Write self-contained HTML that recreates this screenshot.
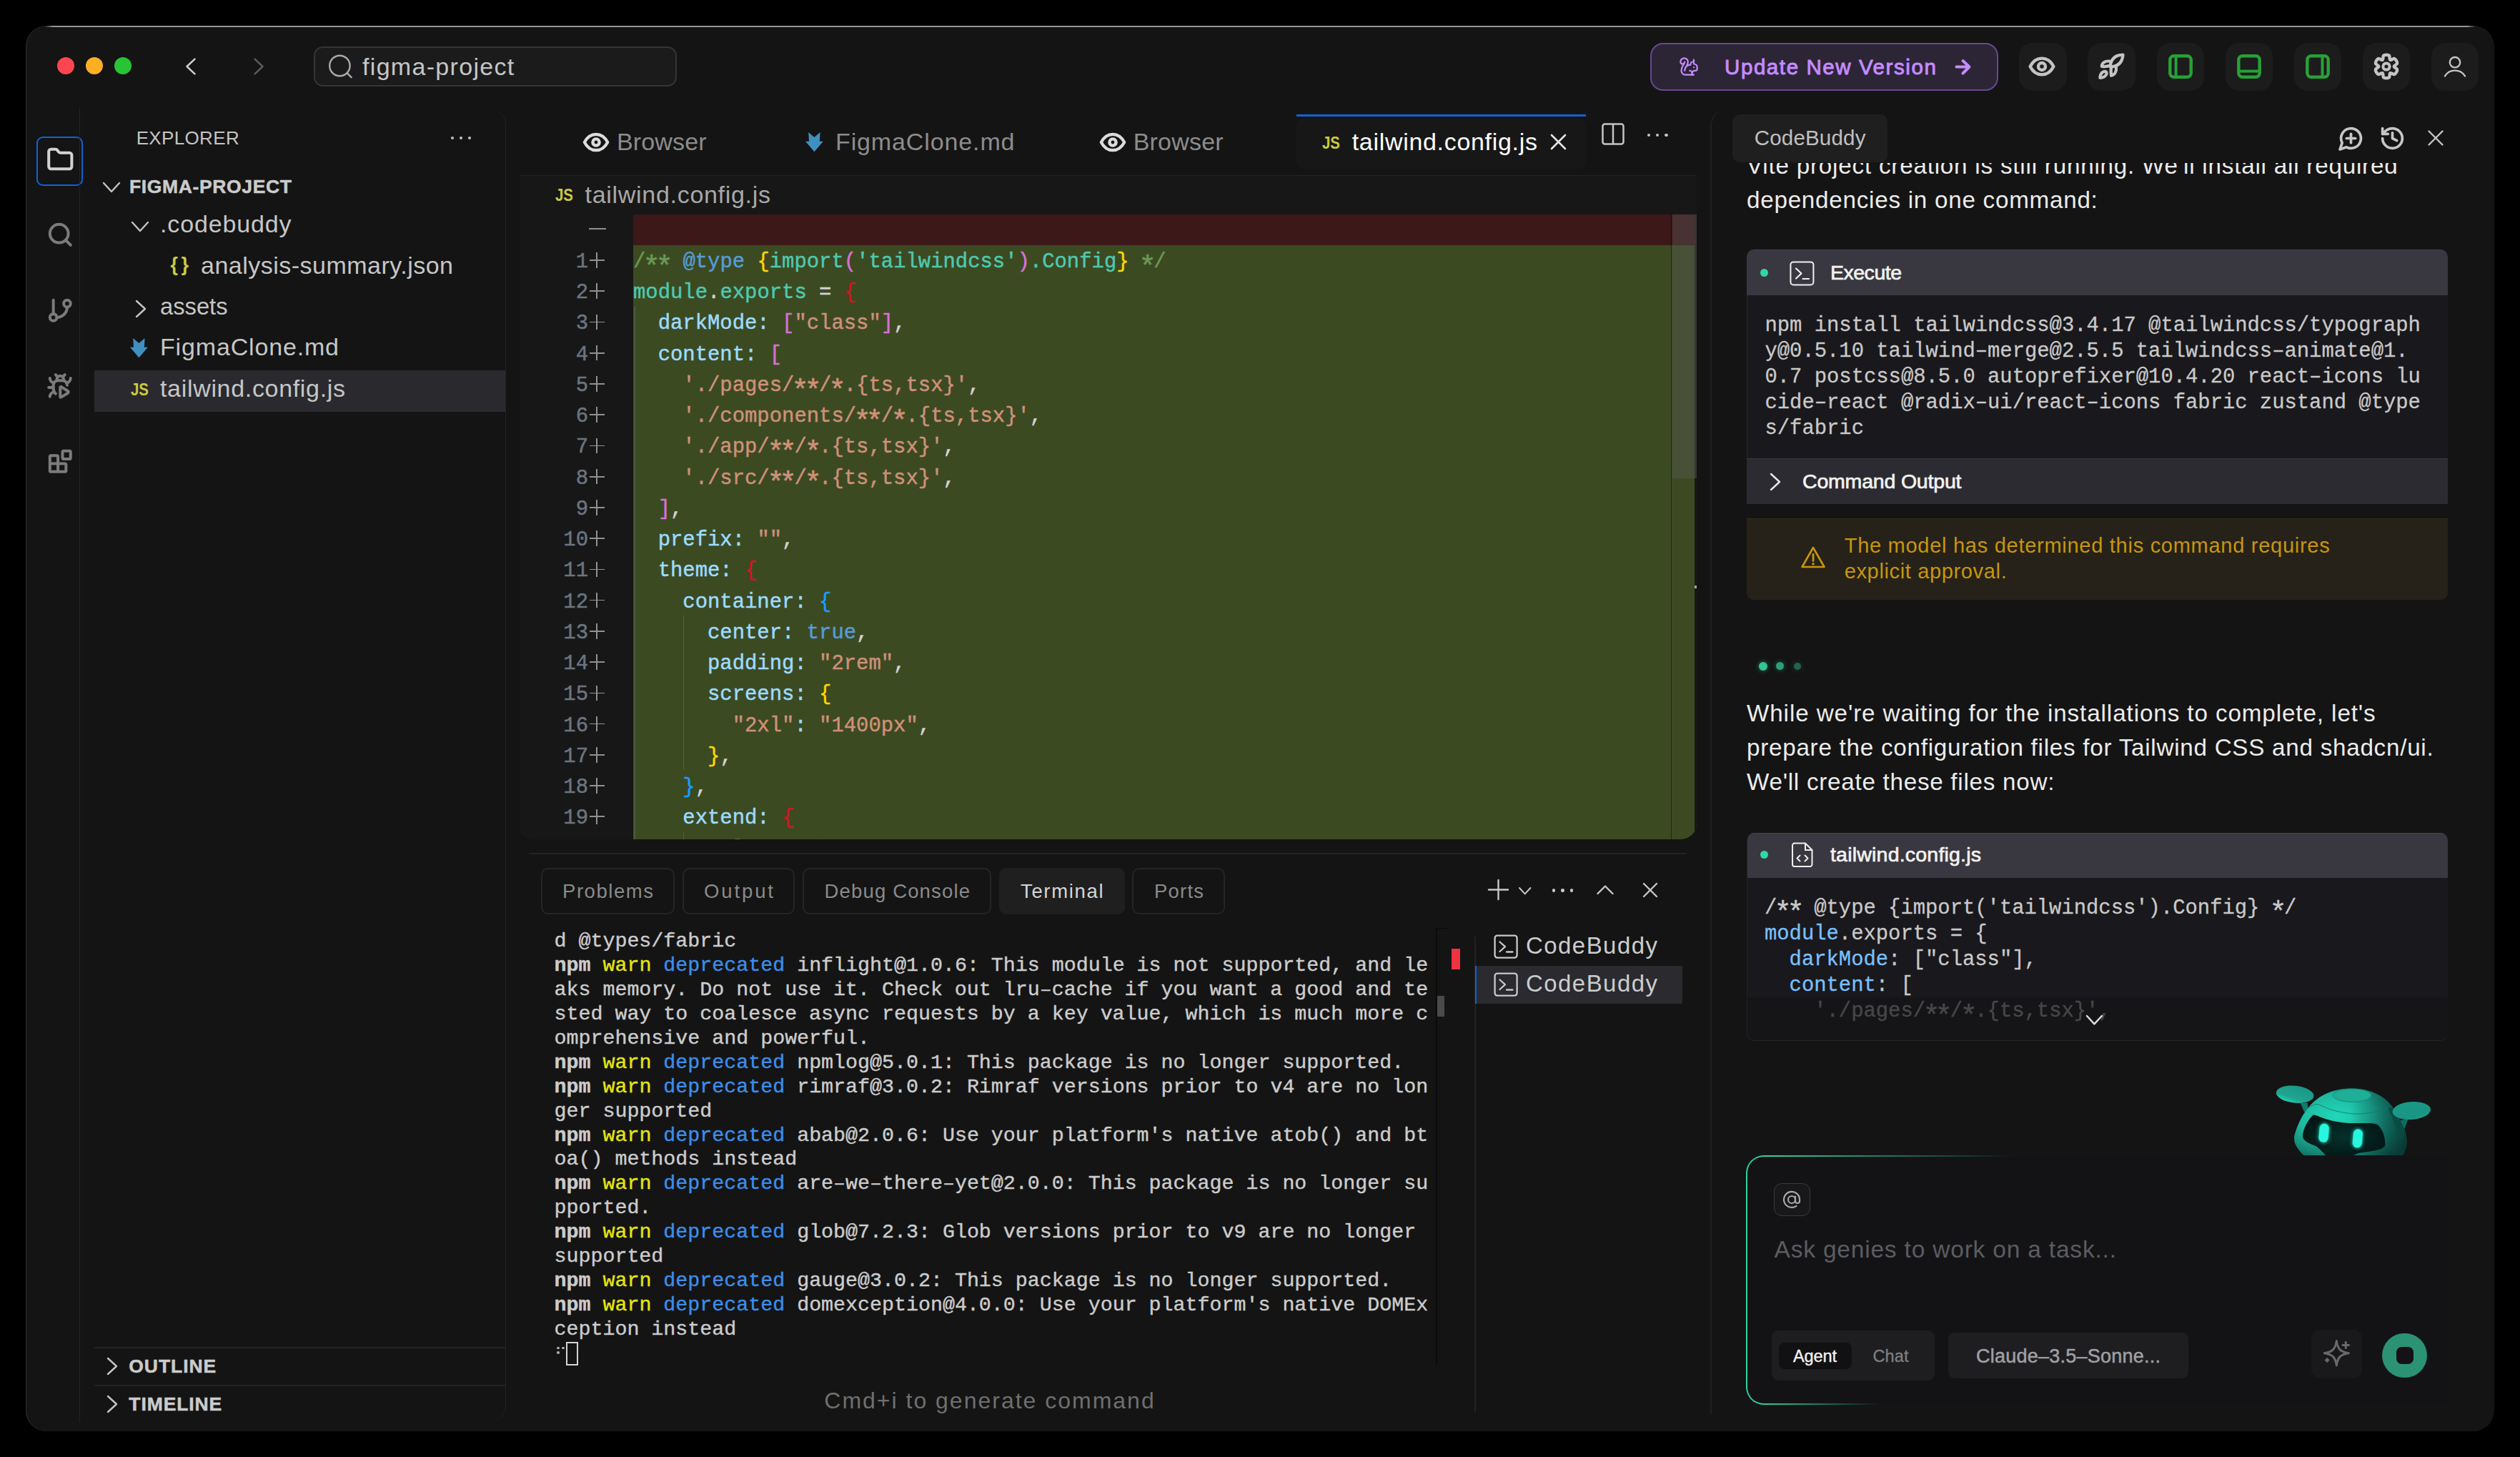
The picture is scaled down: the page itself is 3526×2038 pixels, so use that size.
<!DOCTYPE html>
<html><head><meta charset="utf-8"><title>CodeBuddy</title>
<style>
html,body{margin:0;padding:0;background:#000;font-family:"Liberation Sans",sans-serif;}
body{width:3526px;height:2038px;position:relative;overflow:hidden;font-family:"Liberation Sans",sans-serif;}
div,span,svg{position:absolute;box-sizing:border-box;}
span{white-space:pre;}
.fs{font-family:"Liberation Sans",sans-serif;}
.fm{font-family:"Liberation Mono",monospace;}
span span,.ln span,.st span{position:static;}
.ln span.as{position:relative;top:0.3em;display:inline-block;transform:scale(1.4);}
.ln{position:absolute;white-space:pre;font-family:"Liberation Mono",monospace;}
</style></head><body>

<div id="win" style="left:36px;top:36px;width:3454px;height:1966px;background:#141414;border-radius:29px;overflow:hidden;box-shadow:inset 1.2px 0 0 #2a2a2a;"></div>
<div style="left:62.0px;top:36.0px;width:3402.0px;height:1.7px;background:linear-gradient(90deg,rgba(150,150,150,0),#959595 12px,#959595 calc(100% - 12px),rgba(150,150,150,0));"></div>
<div style="left:79.9px;top:79.9px;width:24.4px;height:24.4px;border-radius:50%;background:#fe464e;"></div>
<div style="left:119.8px;top:79.9px;width:24.4px;height:24.4px;border-radius:50%;background:#fdaf24;"></div>
<div style="left:159.8px;top:79.9px;width:24.4px;height:24.4px;border-radius:50%;background:#29c435;"></div>
<svg style="left:256.7px;top:78.8px;" width="20" height="28" viewBox="0 0 20 28"><path d="M15.5 3.6 L4.5 14 L15.5 24.4" fill="none" stroke="#cdcdcd" stroke-width="2.5" stroke-linecap="round" stroke-linejoin="round"/></svg>
<svg style="left:352.3px;top:78.8px;" width="20" height="28" viewBox="0 0 20 28"><path d="M4.5 3.6 L15.5 14 L4.5 24.4" fill="none" stroke="#5c5c5c" stroke-width="2.5" stroke-linecap="round" stroke-linejoin="round"/></svg>
<div style="left:439.2px;top:65.1px;width:507.6px;height:56.4px;background:#1b1b1b;border:2px solid #353535;border-radius:13px;"></div>
<svg style="left:458.0px;top:75.0px;" width="38" height="38" viewBox="0 0 38 38"><circle cx="17.4" cy="17" r="14.2" fill="none" stroke="#aaaaaa" stroke-width="2.4"/><path d="M27.6 27.2 L33.6 33.2" stroke="#aaaaaa" stroke-width="2.4" stroke-linecap="round"/></svg>
<span class="fs" style="left:507.0px;top:75.5px;font-size:34px;line-height:34px;color:#c6c6c6;letter-spacing:1.315px;">figma-project</span>
<div style="left:2309.4px;top:60.2px;width:486.6px;height:66.6px;background:#2c2535;border:2px solid #68498f;border-radius:18px;"></div>
<svg style="left:2348.5px;top:79.0px;" width="28" height="28" viewBox="0 0 24 24"><g fill="none" stroke="#c58bff" stroke-width="1.9" stroke-linecap="round" stroke-linejoin="round">
<path d="M15.236 22a3 3 0 0 0-2.2-5"/>
<path d="M16 20a3 3 0 0 1 3-3h1a2 2 0 0 0 2-2v-2a4 4 0 0 0-4-4V4"/>
<path d="M18 13h.01"/>
<path d="M18 6a4 4 0 0 0-4 4 7 7 0 0 0-7 7c0-5 4-5 4-10.5a4.5 4.5 0 1 0-9 0 2.5 2.5 0 0 0 5 0C7 10 3 11 3 17c0 2.8 2.2 5 5 5h10"/>
</g></svg>
<span class="fs" style="left:2413.0px;top:78.5px;font-size:29.5px;line-height:29.5px;color:#c58bff;letter-spacing:1.586px;-webkit-text-stroke:0.9px #c58bff;">Update New Version</span>
<svg style="left:2730.0px;top:78.0px;" width="32" height="32" viewBox="0 0 32 32"><path d="M7.5 15.5 H25 M16.5 7 L25.5 15.5 L16.5 24.5" fill="none" stroke="#c58bff" stroke-width="4" stroke-linecap="round" stroke-linejoin="round"/></svg>
<div style="left:2825.1px;top:60.1px;width:66.6px;height:67.0px;background:#1c1c1c;border-radius:19px;"></div>
<div style="left:2921.1px;top:60.1px;width:66.6px;height:67.0px;background:#1c1c1c;border-radius:19px;"></div>
<div style="left:3017.6px;top:60.1px;width:66.6px;height:67.0px;background:#1c1c1c;border-radius:19px;"></div>
<div style="left:3113.6px;top:60.1px;width:66.6px;height:67.0px;background:#1c1c1c;border-radius:19px;"></div>
<div style="left:3209.6px;top:60.1px;width:66.6px;height:67.0px;background:#1c1c1c;border-radius:19px;"></div>
<div style="left:3305.8px;top:60.1px;width:66.6px;height:67.0px;background:#1c1c1c;border-radius:19px;"></div>
<div style="left:3401.5px;top:60.1px;width:66.6px;height:67.0px;background:#1c1c1c;border-radius:19px;"></div>
<svg style="left:2837.3px;top:73.0px;" width="40" height="40" viewBox="0 0 40 40"><path d="M3.6 20 C8 11.5 13.5 8.6 20 8.6 S32 11.5 36.4 20 C32 28.5 26.5 31.4 20 31.4 S8 28.5 3.6 20 Z" fill="none" stroke="#c4c4c4" stroke-width="4.4" stroke-linejoin="round"/><circle cx="20" cy="20" r="5" fill="none" stroke="#c4c4c4" stroke-width="4.4"/></svg>
<svg style="left:2934.4px;top:72.7px;" width="40" height="40" viewBox="0 0 40 40"><g fill="none" stroke="#c4c4c4" stroke-width="4.2" stroke-linecap="round" stroke-linejoin="round">
<path d="M36.5 3.7 C25.5 4 19.5 9.6 18.5 20.5 C29.5 20.2 35.5 14.6 36.5 3.7 Z"/>
<path d="M17.8 12.6 C11 12 6.8 15 6.8 19.8 C11 20.4 15 20 18 18.8"/>
<path d="M27 21.2 C27.5 27 25 31.5 20 32.8 C19.5 29 19.5 24 20 20.5"/>
<path d="M4.3 35.8 C4.5 30 8 26.5 12 26.9 C14 27.5 13.8 30 13 31.5 C11.5 34 8 35.8 4.3 35.8 Z"/>
</g></svg>
<svg style="left:3033.9px;top:75.8px;" width="34" height="34" viewBox="0 0 34 34"><rect x="2.3" y="2.3" width="29.4" height="29.4" rx="5.4" fill="none" stroke="#27a137" stroke-width="4.4"/><path d="M10.6 3 V31" stroke="#27a137" stroke-width="4"/></svg>
<svg style="left:3129.9px;top:75.8px;" width="34" height="34" viewBox="0 0 34 34"><rect x="2.3" y="2.3" width="29.4" height="29.4" rx="5.4" fill="none" stroke="#27a137" stroke-width="4.4"/><path d="M3 23.6 H31" stroke="#27a137" stroke-width="4"/></svg>
<svg style="left:3225.9px;top:75.8px;" width="34" height="34" viewBox="0 0 34 34"><rect x="2.3" y="2.3" width="29.4" height="29.4" rx="5.4" fill="none" stroke="#27a137" stroke-width="4.4"/><path d="M23.5 3 V31" stroke="#27a137" stroke-width="4"/></svg>
<svg style="left:3319.1px;top:72.8px;" width="40" height="40" viewBox="0 0 40 40"><path d="M15.96 4.93 C16.85 3.76 18.65 3.80 20.00 3.80 C21.35 3.80 23.15 3.76 24.04 4.93 C24.92 6.10 24.13 10.15 25.30 10.82 C26.47 11.49 29.58 8.79 31.03 8.97 C32.49 9.15 33.36 10.73 34.03 11.90 C34.70 13.07 35.64 14.61 35.07 15.96 C34.50 17.31 30.60 18.65 30.60 20.00 C30.60 21.35 34.50 22.69 35.07 24.04 C35.64 25.39 34.70 26.93 34.03 28.10 C33.36 29.27 32.49 30.85 31.03 31.03 C29.58 31.21 26.47 28.51 25.30 29.18 C24.13 29.85 24.92 33.90 24.04 35.07 C23.15 36.24 21.35 36.20 20.00 36.20 C18.65 36.20 16.85 36.24 15.96 35.07 C15.08 33.90 15.87 29.85 14.70 29.18 C13.53 28.51 10.42 31.21 8.97 31.03 C7.51 30.85 6.64 29.27 5.97 28.10 C5.30 26.93 4.36 25.39 4.93 24.04 C5.50 22.69 9.40 21.35 9.40 20.00 C9.40 18.65 5.50 17.31 4.93 15.96 C4.36 14.61 5.30 13.07 5.97 11.90 C6.64 10.73 7.51 9.15 8.97 8.97 C10.42 8.79 13.53 11.49 14.70 10.82 C15.87 10.15 15.08 6.10 15.96 4.93 Z" fill="none" stroke="#c4c4c4" stroke-width="4.4" stroke-linejoin="round"/><circle cx="20" cy="20" r="4.6" fill="none" stroke="#c4c4c4" stroke-width="4"/></svg>
<svg style="left:3414.8px;top:73.0px;" width="40" height="40" viewBox="0 0 40 40"><circle cx="20" cy="14.2" r="7.2" fill="none" stroke="#c4c4c4" stroke-width="2.4"/><path d="M6 33.4 C9.5 27.5 14.5 25.6 20 25.6 S30.5 27.5 34 33.4" fill="none" stroke="#c4c4c4" stroke-width="2.4" stroke-linecap="round"/></svg>
<div style="left:50.5px;top:190.7px;width:65.5px;height:69.5px;border:2.5px solid #0f62d6;border-radius:9px;"></div>
<svg style="left:64.7px;top:203.7px;" width="38.6" height="38.6" viewBox="0 0 24 24"><g fill="none" stroke="#d2d2d2" stroke-width="2.5" stroke-linecap="round" stroke-linejoin="round"><path d="M20 20a2 2 0 0 0 2-2V8a2 2 0 0 0-2-2h-7.900a2 2 0 0 1-1.690-.900L9.600 3.900A2 2 0 0 0 7.930 3H4a2 2 0 0 0-2 2v13a2 2 0 0 0 2 2Z"/></g></svg>
<svg style="left:64.7px;top:309.2px;" width="38.6" height="38.6" viewBox="0 0 24 24"><g fill="none" stroke="#7b7b7b" stroke-width="2.5" stroke-linecap="round" stroke-linejoin="round"><circle cx="11" cy="11" r="8"/><path d="m21 21-4.300-4.300"/></g></svg>
<svg style="left:64.7px;top:414.7px;" width="38.6" height="38.6" viewBox="0 0 24 24"><g fill="none" stroke="#7b7b7b" stroke-width="2.5" stroke-linecap="round" stroke-linejoin="round"><line x1="6" x2="6" y1="3" y2="15"/><circle cx="18" cy="6" r="3"/><circle cx="6" cy="18" r="3"/><path d="M18 9a9 9 0 0 1-9 9"/></g></svg>
<svg style="left:64.7px;top:520.7px;" width="38.6" height="38.6" viewBox="0 0 24 24"><g fill="none" stroke="#7b7b7b" stroke-width="2.5" stroke-linecap="round" stroke-linejoin="round"><path d="M12.765 21.522a.5.5 0 0 1-.765-.424v-8.196a.5.5 0 0 1 .765-.424l5.878 3.674a1 1 0 0 1 0 1.696z"/><path d="M14.12 3.88 16 2"/><path d="M18 11a4 4 0 0 0-4-4h-4a4 4 0 0 0-4 4v3a6.1 6.1 0 0 0 2 4.500"/><path d="M20.970 5c0 2.100-1.600 3.800-3.500 4"/><path d="M3 21c0-2.100 1.700-3.900 3.800-4"/><path d="M6 13H2"/><path d="M6.530 9C4.600 8.800 3 7.100 3 5"/><path d="m8 2 1.880 1.880"/><path d="M9 7.130v-1a3.003 3.003 0 1 1 6 0v1"/></g></svg>
<svg style="left:64.7px;top:626.2px;" width="38.6" height="38.6" viewBox="0 0 24 24"><g fill="none" stroke="#7b7b7b" stroke-width="2.5" stroke-linecap="round" stroke-linejoin="round"><rect width="7" height="7" x="14" y="3" rx="1"/><path d="M10 21V8a1 1 0 0 0-1-1H4a1 1 0 0 0-1 1v12a1 1 0 0 0 1 1h12a1 1 0 0 0 1-1v-5a1 1 0 0 0-1-1H3"/></g></svg>
<div style="left:111.0px;top:151.0px;width:597.0px;height:1839.0px;border-right:1.5px solid #232323;border-left:1.5px solid #232323;border-radius:0 24px 24px 0;"></div>
<span class="fs" style="left:190.7px;top:180.3px;font-size:26px;line-height:26px;color:#c4c4c4;letter-spacing:0.342px;">EXPLORER</span>
<div style="left:630.5px;top:191.0px;width:4.2px;height:4.2px;background:#c4c4c4;border-radius:50%;"></div>
<div style="left:642.5px;top:191.0px;width:4.2px;height:4.2px;background:#c4c4c4;border-radius:50%;"></div>
<div style="left:654.5px;top:191.0px;width:4.2px;height:4.2px;background:#c4c4c4;border-radius:50%;"></div>
<svg style="left:143.0px;top:254.0px;" width="26.0" height="16.0" viewBox="0 0 26.0 16.0"><path d="M2 2 L13.0 14.0 L24.0 2" fill="none" stroke="#c4c4c4" stroke-width="2.4" stroke-linecap="round" stroke-linejoin="round"/></svg>
<span class="fs" style="left:181.0px;top:248.1px;font-size:26.5px;line-height:26.5px;color:#cbcbcb;font-weight:700;letter-spacing:0.636px;-webkit-text-stroke:0.5px #cbcbcb;">FIGMA-PROJECT</span>
<div style="left:132.0px;top:518.0px;width:575.0px;height:57.5px;background:#2a2a2e;"></div>
<svg style="left:183.0px;top:309.0px;" width="26.0" height="16.0" viewBox="0 0 26.0 16.0"><path d="M2 2 L13.0 14.0 L24.0 2" fill="none" stroke="#c4c4c4" stroke-width="2.4" stroke-linecap="round" stroke-linejoin="round"/></svg>
<span class="fs" style="left:224.0px;top:296.0px;font-size:34px;line-height:34px;color:#c6c6c6;letter-spacing:0.854px;">.codebuddy</span>
<span class="fs" style="left:238.5px;top:356.7px;font-size:27px;line-height:27px;color:#cbcb41;font-weight:700;letter-spacing:-1.5px;">{ }</span>
<span class="fs" style="left:281.0px;top:353.5px;font-size:34px;line-height:34px;color:#c6c6c6;letter-spacing:0.488px;">analysis-summary.json</span>
<svg style="left:189.0px;top:418.5px;" width="16.0" height="26.0" viewBox="0 0 16.0 26.0"><path d="M2 2 L14.0 13.0 L2 24.0" fill="none" stroke="#c4c4c4" stroke-width="2.4" stroke-linecap="round" stroke-linejoin="round"/></svg>
<span class="fs" style="left:224.0px;top:410.5px;font-size:34px;line-height:34px;color:#c6c6c6;transform:scaleX(0.9617);transform-origin:0 0;">assets</span>
<svg style="left:182.1px;top:473.4px;" width="24.8" height="27.2" viewBox="0 0 24.8 27.2"><path d="M4.22 0 L12.40 7.07 L20.58 0 L19.84 12.78 L24.80 12.78 L12.40 27.20 L0 12.78 L4.96 12.78 Z" fill="#3f90c1"/></svg>
<span class="fs" style="left:224.0px;top:468.0px;font-size:34px;line-height:34px;color:#c6c6c6;letter-spacing:0.835px;">FigmaClone.md</span>
<span class="fs" style="left:182.5px;top:532.5px;font-size:24.5px;line-height:24.5px;color:#cbcb41;font-weight:700;transform:scaleX(0.8342);transform-origin:0 0;">JS</span>
<span class="fs" style="left:224.0px;top:525.5px;font-size:34px;line-height:34px;color:#c6c6c6;letter-spacing:0.673px;">tailwind.config.js</span>
<div style="left:132.0px;top:1884.0px;width:575.0px;height:1.5px;background:#232323;"></div>
<div style="left:132.0px;top:1937.0px;width:575.0px;height:1.5px;background:#232323;"></div>
<svg style="left:149.0px;top:1897.5px;" width="16.0" height="26.0" viewBox="0 0 16.0 26.0"><path d="M2 2 L14.0 13.0 L2 24.0" fill="none" stroke="#c4c4c4" stroke-width="2.4" stroke-linecap="round" stroke-linejoin="round"/></svg>
<span class="fs" style="left:180.3px;top:1897.6px;font-size:26.5px;line-height:26.5px;color:#cbcbcb;font-weight:700;letter-spacing:0.95px;-webkit-text-stroke:0.5px #cbcbcb;">OUTLINE</span>
<svg style="left:149.0px;top:1950.5px;" width="16.0" height="26.0" viewBox="0 0 16.0 26.0"><path d="M2 2 L14.0 13.0 L2 24.0" fill="none" stroke="#c4c4c4" stroke-width="2.4" stroke-linecap="round" stroke-linejoin="round"/></svg>
<span class="fs" style="left:180.3px;top:1950.6px;font-size:26.5px;line-height:26.5px;color:#cbcbcb;font-weight:700;letter-spacing:0.905px;-webkit-text-stroke:0.5px #cbcbcb;">TIMELINE</span>
<svg style="left:814.3px;top:184.0px;" width="40" height="30" viewBox="0 0 40 30"><path d="M3.8 15 C8 7 13.5 3.8 20 3.8 S32 7 36.2 15 C32 23 26.5 26.2 20 26.2 S8 23 3.8 15 Z" fill="none" stroke="#dcdcdc" stroke-width="4.2" stroke-linejoin="round"/><circle cx="20" cy="15" r="4.6" fill="none" stroke="#dcdcdc" stroke-width="4.4"/></svg>
<span class="fs" style="left:863.0px;top:181.3px;font-size:34px;line-height:34px;color:#8c8c8c;letter-spacing:0.151px;">Browser</span>
<svg style="left:1127.1px;top:185.4px;" width="24.8" height="27.2" viewBox="0 0 24.8 27.2"><path d="M4.22 0 L12.40 7.07 L20.58 0 L19.84 12.78 L24.80 12.78 L12.40 27.20 L0 12.78 L4.96 12.78 Z" fill="#3f90c1"/></svg>
<span class="fs" style="left:1169.0px;top:181.3px;font-size:34px;line-height:34px;color:#8c8c8c;letter-spacing:0.877px;">FigmaClone.md</span>
<svg style="left:1536.7px;top:184.0px;" width="40" height="30" viewBox="0 0 40 30"><path d="M3.8 15 C8 7 13.5 3.8 20 3.8 S32 7 36.2 15 C32 23 26.5 26.2 20 26.2 S8 23 3.8 15 Z" fill="none" stroke="#dcdcdc" stroke-width="4.2" stroke-linejoin="round"/><circle cx="20" cy="15" r="4.6" fill="none" stroke="#dcdcdc" stroke-width="4.4"/></svg>
<span class="fs" style="left:1585.7px;top:181.3px;font-size:34px;line-height:34px;color:#8c8c8c;letter-spacing:0.201px;">Browser</span>
<div style="left:1814.0px;top:160.4px;width:405.0px;height:2.4px;background:#1163dc;"></div>
<div style="left:1814.0px;top:163.6px;width:405.0px;height:73.8px;background:#171717;border-radius:11px;"></div>
<span class="fs" style="left:1849.5px;top:187.5px;font-size:24.5px;line-height:24.5px;color:#cbcb41;font-weight:700;transform:scaleX(0.8342);transform-origin:0 0;">JS</span>
<span class="fs" style="left:1891.7px;top:181.3px;font-size:34px;line-height:34px;color:#ffffff;letter-spacing:0.69px;">tailwind.config.js</span>
<svg style="left:2168.0px;top:186.0px;" width="25" height="25" viewBox="0 0 25 25"><path d="M3 3 L22 22 M22 3 L3 22" stroke="#e4e4e4" stroke-width="2.6" stroke-linecap="round"/></svg>
<svg style="left:2241.0px;top:171.6px;" width="32" height="31" viewBox="0 0 32 31"><rect x="1.5" y="1.5" width="29" height="28" rx="3" fill="none" stroke="#c4c4c4" stroke-width="2.5"/><path d="M16 2 V29" stroke="#c4c4c4" stroke-width="2.5"/></svg>
<div style="left:2305.0px;top:186.7px;width:4.2px;height:4.2px;background:#c4c4c4;border-radius:50%;"></div>
<div style="left:2317.2px;top:186.7px;width:4.2px;height:4.2px;background:#c4c4c4;border-radius:50%;"></div>
<div style="left:2329.4px;top:186.7px;width:4.2px;height:4.2px;background:#c4c4c4;border-radius:50%;"></div>
<div class="ed" style="left:727.0px;top:244.7px;width:1646.5px;height:929.3px;background:#171717;border-top:1.5px solid #232323;border-radius:0 0 22px 16px;overflow:hidden;"></div>
<span class="fs" style="left:777.0px;top:261.0px;font-size:24.5px;line-height:24.5px;color:#cbcb41;font-weight:700;transform:scaleX(0.8342);transform-origin:0 0;">JS</span>
<span class="fs" style="left:818.6px;top:255.0px;font-size:34px;line-height:34px;color:#a8a8a8;letter-spacing:0.696px;">tailwind.config.js</span>
<div style="left:727px;top:300px;width:1646.5px;height:874px;overflow:hidden;border-radius:0 0 22px 16px;">
<div style="left:159.0px;top:0.0px;width:1487.5px;height:42.5px;background:#3c1818;"></div>
<div style="left:159.0px;top:42.5px;width:1487.5px;height:900.0px;background:#3c4a22;"></div>
<div style="left:1611.0px;top:0.0px;width:1.2px;height:900.0px;background:rgba(0,0,0,0.45);"></div>
<div style="left:1613.0px;top:0.0px;width:31.0px;height:369.0px;background:rgba(93,93,93,0.39);"></div>
<div style="left:1644.0px;top:0.0px;width:2.7px;height:900.0px;background:#181818;"></div>
<div style="left:1644.0px;top:0.0px;width:2.7px;height:369.0px;background:#363636;"></div>
<div style="left:1644.0px;top:518.5px;width:2.7px;height:4.0px;background:#a2a2a2;"></div>
<div style="left:160.0px;top:128.5px;width:1.5px;height:900.0px;background:rgba(255,255,255,0.10);"></div>
<div style="left:228.6px;top:560.9px;width:1.5px;height:216.2px;background:rgba(255,255,255,0.13);"></div>
<div style="left:228.6px;top:863.5px;width:1.5px;height:129.7px;background:rgba(255,255,255,0.13);"></div>
<div style="left:263.3px;top:690.6px;width:1.5px;height:43.2px;background:rgba(255,255,255,0.0);"></div>
<div class="ln" style="left:159px;top:44.94px;font-size:28.9px;line-height:43.24px;-webkit-text-stroke:0.45px;"><span style="color:#6a9955">/<span class="as">*</span><span class="as">*</span> </span><span style="color:#569cd6">@type</span><span style="color:#6a9955"> </span><span style="color:#ffd700">{</span><span style="color:#4ec9b0">import</span><span style="color:#da70d6">(</span><span style="color:#4ec9b0">'tailwindcss'</span><span style="color:#da70d6">)</span><span style="color:#4ec9b0">.Config</span><span style="color:#ffd700">}</span><span style="color:#6a9955"> <span class="as">*</span>/</span></div>
<div class="ln" style="left:-104px;width:200px;text-align:right;top:44.94px;font-size:28.9px;line-height:43.24px;color:#6b7480;-webkit-text-stroke:0.5px;">1</div>
<div style="left:97.5px;top:63.1px;width:21.6px;height:1.8px;background:#919191;"></div>
<div style="left:107.4px;top:53.2px;width:1.8px;height:21.6px;background:#919191;"></div>
<div class="ln" style="left:159px;top:88.18px;font-size:28.9px;line-height:43.24px;-webkit-text-stroke:0.45px;"><span style="color:#4ec9b0">module</span><span style="color:#d4d4d4">.</span><span style="color:#4ec9b0">exports</span><span style="color:#d4d4d4"> = </span><span style="color:#d2161f">{</span></div>
<div class="ln" style="left:-104px;width:200px;text-align:right;top:88.18px;font-size:28.9px;line-height:43.24px;color:#6b7480;-webkit-text-stroke:0.5px;">2</div>
<div style="left:97.5px;top:106.3px;width:21.6px;height:1.8px;background:#919191;"></div>
<div style="left:107.4px;top:96.4px;width:1.8px;height:21.6px;background:#919191;"></div>
<div class="ln" style="left:159px;top:131.42px;font-size:28.9px;line-height:43.24px;-webkit-text-stroke:0.45px;"><span style="color:#9cdcfe">  darkMode:</span><span style="color:#d4d4d4"> </span><span style="color:#da70d6">[</span><span style="color:#ce9178">"class"</span><span style="color:#da70d6">]</span><span style="color:#d4d4d4">,</span></div>
<div class="ln" style="left:-104px;width:200px;text-align:right;top:131.42px;font-size:28.9px;line-height:43.24px;color:#6b7480;-webkit-text-stroke:0.5px;">3</div>
<div style="left:97.5px;top:149.6px;width:21.6px;height:1.8px;background:#919191;"></div>
<div style="left:107.4px;top:139.7px;width:1.8px;height:21.6px;background:#919191;"></div>
<div class="ln" style="left:159px;top:174.66px;font-size:28.9px;line-height:43.24px;-webkit-text-stroke:0.45px;"><span style="color:#9cdcfe">  content:</span><span style="color:#d4d4d4"> </span><span style="color:#da70d6">[</span></div>
<div class="ln" style="left:-104px;width:200px;text-align:right;top:174.66px;font-size:28.9px;line-height:43.24px;color:#6b7480;-webkit-text-stroke:0.5px;">4</div>
<div style="left:97.5px;top:192.8px;width:21.6px;height:1.8px;background:#919191;"></div>
<div style="left:107.4px;top:182.9px;width:1.8px;height:21.6px;background:#919191;"></div>
<div class="ln" style="left:159px;top:217.90px;font-size:28.9px;line-height:43.24px;-webkit-text-stroke:0.45px;"><span style="color:#ce9178">    './pages/<span class="as">*</span><span class="as">*</span>/<span class="as">*</span>.{ts,tsx}'</span><span style="color:#d4d4d4">,</span></div>
<div class="ln" style="left:-104px;width:200px;text-align:right;top:217.90px;font-size:28.9px;line-height:43.24px;color:#6b7480;-webkit-text-stroke:0.5px;">5</div>
<div style="left:97.5px;top:236.1px;width:21.6px;height:1.8px;background:#919191;"></div>
<div style="left:107.4px;top:226.2px;width:1.8px;height:21.6px;background:#919191;"></div>
<div class="ln" style="left:159px;top:261.14px;font-size:28.9px;line-height:43.24px;-webkit-text-stroke:0.45px;"><span style="color:#ce9178">    './components/<span class="as">*</span><span class="as">*</span>/<span class="as">*</span>.{ts,tsx}'</span><span style="color:#d4d4d4">,</span></div>
<div class="ln" style="left:-104px;width:200px;text-align:right;top:261.14px;font-size:28.9px;line-height:43.24px;color:#6b7480;-webkit-text-stroke:0.5px;">6</div>
<div style="left:97.5px;top:279.3px;width:21.6px;height:1.8px;background:#919191;"></div>
<div style="left:107.4px;top:269.4px;width:1.8px;height:21.6px;background:#919191;"></div>
<div class="ln" style="left:159px;top:304.38px;font-size:28.9px;line-height:43.24px;-webkit-text-stroke:0.45px;"><span style="color:#ce9178">    './app/<span class="as">*</span><span class="as">*</span>/<span class="as">*</span>.{ts,tsx}'</span><span style="color:#d4d4d4">,</span></div>
<div class="ln" style="left:-104px;width:200px;text-align:right;top:304.38px;font-size:28.9px;line-height:43.24px;color:#6b7480;-webkit-text-stroke:0.5px;">7</div>
<div style="left:97.5px;top:322.5px;width:21.6px;height:1.8px;background:#919191;"></div>
<div style="left:107.4px;top:312.6px;width:1.8px;height:21.6px;background:#919191;"></div>
<div class="ln" style="left:159px;top:347.62px;font-size:28.9px;line-height:43.24px;-webkit-text-stroke:0.45px;"><span style="color:#ce9178">    './src/<span class="as">*</span><span class="as">*</span>/<span class="as">*</span>.{ts,tsx}'</span><span style="color:#d4d4d4">,</span></div>
<div class="ln" style="left:-104px;width:200px;text-align:right;top:347.62px;font-size:28.9px;line-height:43.24px;color:#6b7480;-webkit-text-stroke:0.5px;">8</div>
<div style="left:97.5px;top:365.8px;width:21.6px;height:1.8px;background:#919191;"></div>
<div style="left:107.4px;top:355.9px;width:1.8px;height:21.6px;background:#919191;"></div>
<div class="ln" style="left:159px;top:390.86px;font-size:28.9px;line-height:43.24px;-webkit-text-stroke:0.45px;"><span style="color:#da70d6">  ]</span><span style="color:#d4d4d4">,</span></div>
<div class="ln" style="left:-104px;width:200px;text-align:right;top:390.86px;font-size:28.9px;line-height:43.24px;color:#6b7480;-webkit-text-stroke:0.5px;">9</div>
<div style="left:97.5px;top:409.0px;width:21.6px;height:1.8px;background:#919191;"></div>
<div style="left:107.4px;top:399.1px;width:1.8px;height:21.6px;background:#919191;"></div>
<div class="ln" style="left:159px;top:434.10px;font-size:28.9px;line-height:43.24px;-webkit-text-stroke:0.45px;"><span style="color:#9cdcfe">  prefix:</span><span style="color:#d4d4d4"> </span><span style="color:#ce9178">""</span><span style="color:#d4d4d4">,</span></div>
<div class="ln" style="left:-104px;width:200px;text-align:right;top:434.10px;font-size:28.9px;line-height:43.24px;color:#6b7480;-webkit-text-stroke:0.5px;">10</div>
<div style="left:97.5px;top:452.3px;width:21.6px;height:1.8px;background:#919191;"></div>
<div style="left:107.4px;top:442.4px;width:1.8px;height:21.6px;background:#919191;"></div>
<div class="ln" style="left:159px;top:477.34px;font-size:28.9px;line-height:43.24px;-webkit-text-stroke:0.45px;"><span style="color:#9cdcfe">  theme:</span><span style="color:#d4d4d4"> </span><span style="color:#d2161f">{</span></div>
<div class="ln" style="left:-104px;width:200px;text-align:right;top:477.34px;font-size:28.9px;line-height:43.24px;color:#6b7480;-webkit-text-stroke:0.5px;">11</div>
<div style="left:97.5px;top:495.5px;width:21.6px;height:1.8px;background:#919191;"></div>
<div style="left:107.4px;top:485.6px;width:1.8px;height:21.6px;background:#919191;"></div>
<div class="ln" style="left:159px;top:520.58px;font-size:28.9px;line-height:43.24px;-webkit-text-stroke:0.45px;"><span style="color:#9cdcfe">    container:</span><span style="color:#d4d4d4"> </span><span style="color:#179fff">{</span></div>
<div class="ln" style="left:-104px;width:200px;text-align:right;top:520.58px;font-size:28.9px;line-height:43.24px;color:#6b7480;-webkit-text-stroke:0.5px;">12</div>
<div style="left:97.5px;top:538.7px;width:21.6px;height:1.8px;background:#919191;"></div>
<div style="left:107.4px;top:528.8px;width:1.8px;height:21.6px;background:#919191;"></div>
<div class="ln" style="left:159px;top:563.82px;font-size:28.9px;line-height:43.24px;-webkit-text-stroke:0.45px;"><span style="color:#9cdcfe">      center:</span><span style="color:#d4d4d4"> </span><span style="color:#569cd6">true</span><span style="color:#d4d4d4">,</span></div>
<div class="ln" style="left:-104px;width:200px;text-align:right;top:563.82px;font-size:28.9px;line-height:43.24px;color:#6b7480;-webkit-text-stroke:0.5px;">13</div>
<div style="left:97.5px;top:582.0px;width:21.6px;height:1.8px;background:#919191;"></div>
<div style="left:107.4px;top:572.1px;width:1.8px;height:21.6px;background:#919191;"></div>
<div class="ln" style="left:159px;top:607.06px;font-size:28.9px;line-height:43.24px;-webkit-text-stroke:0.45px;"><span style="color:#9cdcfe">      padding:</span><span style="color:#d4d4d4"> </span><span style="color:#ce9178">"2rem"</span><span style="color:#d4d4d4">,</span></div>
<div class="ln" style="left:-104px;width:200px;text-align:right;top:607.06px;font-size:28.9px;line-height:43.24px;color:#6b7480;-webkit-text-stroke:0.5px;">14</div>
<div style="left:97.5px;top:625.2px;width:21.6px;height:1.8px;background:#919191;"></div>
<div style="left:107.4px;top:615.3px;width:1.8px;height:21.6px;background:#919191;"></div>
<div class="ln" style="left:159px;top:650.30px;font-size:28.9px;line-height:43.24px;-webkit-text-stroke:0.45px;"><span style="color:#9cdcfe">      screens:</span><span style="color:#d4d4d4"> </span><span style="color:#ffd700">{</span></div>
<div class="ln" style="left:-104px;width:200px;text-align:right;top:650.30px;font-size:28.9px;line-height:43.24px;color:#6b7480;-webkit-text-stroke:0.5px;">15</div>
<div style="left:97.5px;top:668.5px;width:21.6px;height:1.8px;background:#919191;"></div>
<div style="left:107.4px;top:658.6px;width:1.8px;height:21.6px;background:#919191;"></div>
<div class="ln" style="left:159px;top:693.54px;font-size:28.9px;line-height:43.24px;-webkit-text-stroke:0.45px;"><span style="color:#ce9178">        "2xl"</span><span style="color:#9cdcfe">:</span><span style="color:#d4d4d4"> </span><span style="color:#ce9178">"1400px"</span><span style="color:#d4d4d4">,</span></div>
<div class="ln" style="left:-104px;width:200px;text-align:right;top:693.54px;font-size:28.9px;line-height:43.24px;color:#6b7480;-webkit-text-stroke:0.5px;">16</div>
<div style="left:97.5px;top:711.7px;width:21.6px;height:1.8px;background:#919191;"></div>
<div style="left:107.4px;top:701.8px;width:1.8px;height:21.6px;background:#919191;"></div>
<div class="ln" style="left:159px;top:736.78px;font-size:28.9px;line-height:43.24px;-webkit-text-stroke:0.45px;"><span style="color:#ffd700">      }</span><span style="color:#d4d4d4">,</span></div>
<div class="ln" style="left:-104px;width:200px;text-align:right;top:736.78px;font-size:28.9px;line-height:43.24px;color:#6b7480;-webkit-text-stroke:0.5px;">17</div>
<div style="left:97.5px;top:754.9px;width:21.6px;height:1.8px;background:#919191;"></div>
<div style="left:107.4px;top:745.0px;width:1.8px;height:21.6px;background:#919191;"></div>
<div class="ln" style="left:159px;top:780.02px;font-size:28.9px;line-height:43.24px;-webkit-text-stroke:0.45px;"><span style="color:#179fff">    }</span><span style="color:#d4d4d4">,</span></div>
<div class="ln" style="left:-104px;width:200px;text-align:right;top:780.02px;font-size:28.9px;line-height:43.24px;color:#6b7480;-webkit-text-stroke:0.5px;">18</div>
<div style="left:97.5px;top:798.2px;width:21.6px;height:1.8px;background:#919191;"></div>
<div style="left:107.4px;top:788.3px;width:1.8px;height:21.6px;background:#919191;"></div>
<div class="ln" style="left:159px;top:823.26px;font-size:28.9px;line-height:43.24px;-webkit-text-stroke:0.45px;"><span style="color:#9cdcfe">    extend:</span><span style="color:#d4d4d4"> </span><span style="color:#d2161f">{</span></div>
<div class="ln" style="left:-104px;width:200px;text-align:right;top:823.26px;font-size:28.9px;line-height:43.24px;color:#6b7480;-webkit-text-stroke:0.5px;">19</div>
<div style="left:97.5px;top:841.4px;width:21.6px;height:1.8px;background:#919191;"></div>
<div style="left:107.4px;top:831.5px;width:1.8px;height:21.6px;background:#919191;"></div>
<div class="ln" style="left:159px;top:866.50px;font-size:28.9px;line-height:43.24px;-webkit-text-stroke:0.45px;"><span style="color:#9cdcfe">      colors:</span><span style="color:#d4d4d4"> </span><span style="color:#d2161f">{</span></div>
<div class="ln" style="left:-104px;width:200px;text-align:right;top:866.50px;font-size:28.9px;line-height:43.24px;color:#6b7480;-webkit-text-stroke:0.5px;">20</div>
<div style="left:97.5px;top:884.7px;width:21.6px;height:1.8px;background:#919191;"></div>
<div style="left:107.4px;top:874.8px;width:1.8px;height:21.6px;background:#919191;"></div>
<div style="left:97.4px;top:19.2px;width:23.3px;height:1.8px;background:#919191;"></div>
</div>
<div style="left:740.0px;top:1193.0px;width:1620.0px;height:1.5px;background:#232323;"></div>
<div style="left:756.7px;top:1213.6px;width:187.5px;height:65.4px;border:2px solid #252525;border-radius:10px;"></div>
<span class="fs" style="left:787.0px;top:1232.9px;font-size:27.5px;line-height:27.5px;color:#8a8a8a;letter-spacing:1.55px;">Problems</span>
<div style="left:955.0px;top:1213.6px;width:157.0px;height:65.4px;border:2px solid #252525;border-radius:10px;"></div>
<span class="fs" style="left:985.0px;top:1232.9px;font-size:27.5px;line-height:27.5px;color:#8a8a8a;letter-spacing:2.889px;">Output</span>
<div style="left:1123.0px;top:1213.6px;width:264.4px;height:65.4px;border:2px solid #252525;border-radius:10px;"></div>
<span class="fs" style="left:1153.5px;top:1232.9px;font-size:27.5px;line-height:27.5px;color:#8a8a8a;letter-spacing:1.161px;">Debug Console</span>
<div style="left:1397.5px;top:1213.6px;width:176.1px;height:65.4px;background:#1f1f1f;border-radius:10px;"></div>
<span class="fs" style="left:1428.0px;top:1232.9px;font-size:27.5px;line-height:27.5px;color:#d6d6d6;letter-spacing:1.655px;">Terminal</span>
<div style="left:1584.4px;top:1213.6px;width:129.5px;height:65.4px;border:2px solid #252525;border-radius:10px;"></div>
<span class="fs" style="left:1615.0px;top:1232.9px;font-size:27.5px;line-height:27.5px;color:#8a8a8a;letter-spacing:1.204px;">Ports</span>
<svg style="left:2081.0px;top:1229.0px;" width="31" height="31" viewBox="0 0 31 31"><path d="M15.5 2 V29 M2 15.5 H29" stroke="#c8c8c8" stroke-width="2.4" stroke-linecap="round"/></svg>
<svg style="left:2123.8px;top:1240.1px;" width="19.4" height="12.399999999999999" viewBox="0 0 19.4 12.399999999999999"><path d="M2 2 L9.7 10.4 L17.4 2" fill="none" stroke="#c8c8c8" stroke-width="2.0" stroke-linecap="round" stroke-linejoin="round"/></svg>
<div style="left:2172.0px;top:1243.2px;width:4.4px;height:4.4px;background:#c8c8c8;border-radius:50%;"></div>
<div style="left:2184.3px;top:1243.2px;width:4.4px;height:4.4px;background:#c8c8c8;border-radius:50%;"></div>
<div style="left:2196.6px;top:1243.2px;width:4.4px;height:4.4px;background:#c8c8c8;border-radius:50%;"></div>
<svg style="left:2231.0px;top:1235.0px;" width="30" height="20" viewBox="0 0 30 20"><path d="M4.5 15 L15 4.5 L25.5 15" fill="none" stroke="#c8c8c8" stroke-width="2.4" stroke-linecap="round" stroke-linejoin="round"/></svg>
<svg style="left:2297.0px;top:1233.3px;" width="24" height="24" viewBox="0 0 24 24"><path d="M3 3 L21 21 M21 3 L3 21" stroke="#c8c8c8" stroke-width="2.4" stroke-linecap="round"/></svg>
<div class="ln" style="left:775.5px;top:1299.67px;font-size:28.3px;line-height:33.98px;-webkit-text-stroke:0.4px;"><span style="color:#cccccc">d @types/fabric</span></div>
<div class="ln" style="left:775.5px;top:1333.65px;font-size:28.3px;line-height:33.98px;-webkit-text-stroke:0.4px;"><b style="color:#cccccc">npm</b> <span style="color:#e5e510">warn</span> <span style="color:#3b8eea">deprecated</span> <span style="color:#cccccc">inflight@1.0.6: This module is not supported, and le</span></div>
<div class="ln" style="left:775.5px;top:1367.63px;font-size:28.3px;line-height:33.98px;-webkit-text-stroke:0.4px;"><span style="color:#cccccc">aks memory. Do not use it. Check out lru–cache if you want a good and te</span></div>
<div class="ln" style="left:775.5px;top:1401.61px;font-size:28.3px;line-height:33.98px;-webkit-text-stroke:0.4px;"><span style="color:#cccccc">sted way to coalesce async requests by a key value, which is much more c</span></div>
<div class="ln" style="left:775.5px;top:1435.59px;font-size:28.3px;line-height:33.98px;-webkit-text-stroke:0.4px;"><span style="color:#cccccc">omprehensive and powerful.</span></div>
<div class="ln" style="left:775.5px;top:1469.57px;font-size:28.3px;line-height:33.98px;-webkit-text-stroke:0.4px;"><b style="color:#cccccc">npm</b> <span style="color:#e5e510">warn</span> <span style="color:#3b8eea">deprecated</span> <span style="color:#cccccc">npmlog@5.0.1: This package is no longer supported.</span></div>
<div class="ln" style="left:775.5px;top:1503.55px;font-size:28.3px;line-height:33.98px;-webkit-text-stroke:0.4px;"><b style="color:#cccccc">npm</b> <span style="color:#e5e510">warn</span> <span style="color:#3b8eea">deprecated</span> <span style="color:#cccccc">rimraf@3.0.2: Rimraf versions prior to v4 are no lon</span></div>
<div class="ln" style="left:775.5px;top:1537.53px;font-size:28.3px;line-height:33.98px;-webkit-text-stroke:0.4px;"><span style="color:#cccccc">ger supported</span></div>
<div class="ln" style="left:775.5px;top:1571.51px;font-size:28.3px;line-height:33.98px;-webkit-text-stroke:0.4px;"><b style="color:#cccccc">npm</b> <span style="color:#e5e510">warn</span> <span style="color:#3b8eea">deprecated</span> <span style="color:#cccccc">abab@2.0.6: Use your platform's native atob() and bt</span></div>
<div class="ln" style="left:775.5px;top:1605.49px;font-size:28.3px;line-height:33.98px;-webkit-text-stroke:0.4px;"><span style="color:#cccccc">oa() methods instead</span></div>
<div class="ln" style="left:775.5px;top:1639.47px;font-size:28.3px;line-height:33.98px;-webkit-text-stroke:0.4px;"><b style="color:#cccccc">npm</b> <span style="color:#e5e510">warn</span> <span style="color:#3b8eea">deprecated</span> <span style="color:#cccccc">are–we–there–yet@2.0.0: This package is no longer su</span></div>
<div class="ln" style="left:775.5px;top:1673.45px;font-size:28.3px;line-height:33.98px;-webkit-text-stroke:0.4px;"><span style="color:#cccccc">pported.</span></div>
<div class="ln" style="left:775.5px;top:1707.43px;font-size:28.3px;line-height:33.98px;-webkit-text-stroke:0.4px;"><b style="color:#cccccc">npm</b> <span style="color:#e5e510">warn</span> <span style="color:#3b8eea">deprecated</span> <span style="color:#cccccc">glob@7.2.3: Glob versions prior to v9 are no longer</span></div>
<div class="ln" style="left:775.5px;top:1741.41px;font-size:28.3px;line-height:33.98px;-webkit-text-stroke:0.4px;"><span style="color:#cccccc">supported</span></div>
<div class="ln" style="left:775.5px;top:1775.39px;font-size:28.3px;line-height:33.98px;-webkit-text-stroke:0.4px;"><b style="color:#cccccc">npm</b> <span style="color:#e5e510">warn</span> <span style="color:#3b8eea">deprecated</span> <span style="color:#cccccc">gauge@3.0.2: This package is no longer supported.</span></div>
<div class="ln" style="left:775.5px;top:1809.37px;font-size:28.3px;line-height:33.98px;-webkit-text-stroke:0.4px;"><b style="color:#cccccc">npm</b> <span style="color:#e5e510">warn</span> <span style="color:#3b8eea">deprecated</span> <span style="color:#cccccc">domexception@4.0.0: Use your platform's native DOMEx</span></div>
<div class="ln" style="left:775.5px;top:1843.35px;font-size:28.3px;line-height:33.98px;-webkit-text-stroke:0.4px;"><span style="color:#cccccc">ception instead</span></div>
<div style="left:779.3px;top:1883.6px;width:3.8px;height:3.8px;background:#b4b4b4;border-radius:50%;"></div>
<div style="left:786.4px;top:1883.6px;width:3.8px;height:3.8px;background:#b4b4b4;border-radius:50%;"></div>
<div style="left:779.3px;top:1890.2px;width:3.8px;height:3.8px;background:#b4b4b4;border-radius:50%;"></div>
<div style="left:792.0px;top:1876.5px;width:17.0px;height:33.5px;border:2px solid #d4d4d4;"></div>
<div style="left:2009.0px;top:1298.0px;width:1.5px;height:611.0px;background:#0a0a0a;"></div>
<div style="left:2009.0px;top:1297.5px;width:18.0px;height:1.5px;background:#0a0a0a;"></div>
<div style="left:2011.0px;top:1393.0px;width:9.5px;height:29.0px;background:#4a4a4a;"></div>
<div style="left:2031.0px;top:1326.5px;width:11.5px;height:29.0px;background:#ee3340;"></div>
<div style="left:2063.0px;top:1310.0px;width:1.5px;height:666.0px;background:#212121;"></div>
<div style="left:2064.0px;top:1351.0px;width:289.5px;height:52.6px;background:#2a2a2f;border-left:2.5px solid #0f62d6;"></div>
<svg style="left:2090.2px;top:1306.5px;" width="35" height="35" viewBox="0 0 35 35"><rect x="1.6" y="1.6" width="31" height="31" rx="3.5" fill="none" stroke="#c8c8c8" stroke-width="2.3"/><path d="M8.5 10.5 L16 17.2 L8.5 24 M18 24.5 H26.5" fill="none" stroke="#c8c8c8" stroke-width="2.3" stroke-linecap="round" stroke-linejoin="round"/></svg>
<span class="fs" style="left:2135.0px;top:1306.1px;font-size:33px;line-height:33px;color:#cccccc;letter-spacing:1.442px;">CodeBuddy</span>
<svg style="left:2090.2px;top:1359.5px;" width="35" height="35" viewBox="0 0 35 35"><rect x="1.6" y="1.6" width="31" height="31" rx="3.5" fill="none" stroke="#c8c8c8" stroke-width="2.3"/><path d="M8.5 10.5 L16 17.2 L8.5 24 M18 24.5 H26.5" fill="none" stroke="#c8c8c8" stroke-width="2.3" stroke-linecap="round" stroke-linejoin="round"/></svg>
<span class="fs" style="left:2135.0px;top:1359.1px;font-size:33px;line-height:33px;color:#cccccc;letter-spacing:1.442px;">CodeBuddy</span>
<span class="fs" style="left:1153.3px;top:1943.2px;font-size:32px;line-height:32px;color:#6f6f6f;letter-spacing:1.994px;">Cmd+i to generate command</span>
<div style="left:2393.2px;top:152.0px;width:600.0px;height:1826.0px;border-left:2px solid #202020;border-radius:24px 0 0 0;"></div>
<div style="left:2440px;top:228px;width:1000px;height:24px;overflow:hidden;">
<span class="fs" style="left:4.0px;top:-13.2px;font-size:33.2px;line-height:33.2px;color:#ececec;letter-spacing:0.792px;">Vite project creation is still running. We'll install all required</span>
</div>
<div style="left:2424.0px;top:160.1px;width:216.8px;height:66.9px;background:#1f1f1f;border-radius:10px;"></div>
<span class="fs" style="left:2454.7px;top:178.2px;font-size:29.5px;line-height:29.5px;color:#c0c0c0;letter-spacing:0.191px;">CodeBuddy</span>
<svg style="left:3270.9px;top:174.5px;" width="37" height="37" viewBox="0 0 24 24"><g fill="none" stroke="#c6c6c6" stroke-width="2.4" stroke-linecap="round" stroke-linejoin="round"><path d="M7.900 20A9 9 0 1 0 4 16.100L2 22Z"/><path d="M8 12h8"/><path d="M12 8v8"/></g></svg>
<svg style="left:3329.2px;top:174.5px;" width="37" height="37" viewBox="0 0 24 24"><g fill="none" stroke="#c6c6c6" stroke-width="2.4" stroke-linecap="round" stroke-linejoin="round"><path d="M3 12a9 9 0 1 0 9-9 9.750 9.750 0 0 0-6.740 2.740L3 8"/><path d="M3 3v5h5"/><path d="M12 7v5l4 2"/></g></svg>
<svg style="left:3395.7px;top:181.0px;" width="24" height="24" viewBox="0 0 24 24"><path d="M2.5 2.5 L21.5 21.5 M21.5 2.5 L2.5 21.5" stroke="#c6c6c6" stroke-width="2.4" stroke-linecap="round"/></svg>
<span class="fs" style="left:2444.0px;top:262.7px;font-size:33.2px;line-height:33.2px;color:#ececec;letter-spacing:0.754px;">dependencies in one command:</span>
<div style="left:2444px;top:349px;width:981px;height:490px;border-radius:10px;overflow:hidden;background:#19181c;box-shadow:inset 1.2px 0 0 #26252b;">
<div style="left:0.0px;top:0.0px;width:981.0px;height:63.5px;background:#39373f;border-top:1.5px solid #45434b;border-radius:10px 10px 0 0;"></div>
<div style="left:0.0px;top:292.0px;width:981.0px;height:63.5px;background:#2c2b31;border-top:1.5px solid #3a393f;"></div>
<div style="left:0.0px;top:355.5px;width:981.0px;height:20.0px;background:#141414;"></div>
<div style="left:0.0px;top:375.5px;width:981.0px;height:114.5px;background:#262219;border-top:1.5px solid #322d1e;"></div>
</div>
<div style="left:2463.2px;top:375.9px;width:10.8px;height:10.8px;background:#2fd8a4;border-radius:50%;"></div>
<svg style="left:2504.0px;top:365.0px;" width="35" height="35" viewBox="0 0 35 35"><rect x="1.4" y="1.4" width="32" height="32" rx="4" fill="none" stroke="#f0f0f0" stroke-width="2"/><path d="M9 10.5 L16.5 17.5 L9 24.5 M18.5 25 H27" fill="none" stroke="#f0f0f0" stroke-width="2.2" stroke-linecap="round" stroke-linejoin="round"/></svg>
<span class="fs" style="left:2561.0px;top:366.8px;font-size:28.5px;line-height:28.5px;color:#f2f2f2;letter-spacing:-0.496px;-webkit-text-stroke:0.7px #f2f2f2;">Execute</span>
<div class="ln" style="left:2469.5px;top:438.36px;font-size:28.85px;line-height:36.0px;color:#c9c9c9;-webkit-text-stroke:0.3px;">npm install tailwindcss@3.4.17 @tailwindcss/typograph</div>
<div class="ln" style="left:2469.5px;top:474.36px;font-size:28.85px;line-height:36.0px;color:#c9c9c9;-webkit-text-stroke:0.3px;">y@0.5.10 tailwind–merge@2.5.5 tailwindcss–animate@1.</div>
<div class="ln" style="left:2469.5px;top:510.36px;font-size:28.85px;line-height:36.0px;color:#c9c9c9;-webkit-text-stroke:0.3px;">0.7 postcss@8.5.0 autoprefixer@10.4.20 react–icons lu</div>
<div class="ln" style="left:2469.5px;top:546.36px;font-size:28.85px;line-height:36.0px;color:#c9c9c9;-webkit-text-stroke:0.3px;">cide–react @radix–ui/react–icons fabric zustand @type</div>
<div class="ln" style="left:2469.5px;top:582.36px;font-size:28.85px;line-height:36.0px;color:#c9c9c9;-webkit-text-stroke:0.3px;">s/fabric</div>
<svg style="left:2476.0px;top:661.0px;" width="16.0" height="26.0" viewBox="0 0 16.0 26.0"><path d="M2 2 L14.0 13.0 L2 24.0" fill="none" stroke="#e8e8e8" stroke-width="2.4" stroke-linecap="round" stroke-linejoin="round"/></svg>
<span class="fs" style="left:2522.0px;top:658.8px;font-size:28.5px;line-height:28.5px;color:#f2f2f2;letter-spacing:-0.188px;-webkit-text-stroke:0.7px #f2f2f2;">Command Output</span>
<svg style="left:2519.0px;top:763.0px;" width="36" height="33" viewBox="0 0 36 33"><path d="M18 3 L33.5 30 H2.5 Z" fill="none" stroke="#c8960c" stroke-width="2.6" stroke-linejoin="round"/><path d="M18 12.5 V21.5" stroke="#c8960c" stroke-width="2.8" stroke-linecap="round"/><circle cx="18" cy="25.7" r="1.7" fill="#c8960c"/></svg>
<span class="fs" style="left:2580.7px;top:749.4px;font-size:29px;line-height:29px;color:#c8960c;letter-spacing:0.725px;">The model has determined this command requires</span>
<span class="fs" style="left:2580.7px;top:784.9px;font-size:29px;line-height:29px;color:#c8960c;letter-spacing:0.647px;">explicit approval.</span>
<div style="left:2460.8px;top:925.5px;width:12.4px;height:12.4px;background:#2fc494;border-radius:50%;opacity:1;box-shadow:0 0 7px rgba(47,196,148,0.55);"></div>
<div style="left:2485.2px;top:926.1px;width:11.2px;height:11.2px;background:#2fc494;border-radius:50%;opacity:0.8;box-shadow:0 0 7px rgba(47,196,148,0.55);"></div>
<div style="left:2509.6px;top:926.7px;width:10.0px;height:10.0px;background:#2fc494;border-radius:50%;opacity:0.45;box-shadow:0 0 7px rgba(47,196,148,0.55);"></div>
<span class="fs" style="left:2444.0px;top:981.0px;font-size:33.2px;line-height:33.2px;color:#ececec;letter-spacing:0.908px;">While we're waiting for the installations to complete, let's</span>
<span class="fs" style="left:2444.0px;top:1028.5px;font-size:33.2px;line-height:33.2px;color:#ececec;letter-spacing:0.746px;">prepare the configuration files for Tailwind CSS and shadcn/ui.</span>
<span class="fs" style="left:2444.0px;top:1076.5px;font-size:33.2px;line-height:33.2px;color:#ececec;letter-spacing:0.738px;">We'll create these files now:</span>
<div style="left:2444px;top:1164.5px;width:981px;height:291px;border-radius:10px;overflow:hidden;background:#19181c;border-bottom:1.5px solid #262529;border-left:1.5px solid #222126;">
<div style="left:-1.5px;top:0.0px;width:981.0px;height:63.0px;background:#39373f;border-top:1.5px solid #45434b;"></div>
<div class="ln" style="left:24px;top:88.16px;font-size:28.85px;line-height:36.0px;-webkit-text-stroke:0.3px;"><span style="color:#c9c9c9">/<span class="as">*</span><span class="as">*</span> @type {import('tailwindcss').Config} <span class="as">*</span>/</span></div>
<div class="ln" style="left:24px;top:124.21px;font-size:28.85px;line-height:36.0px;-webkit-text-stroke:0.3px;"><span style="color:#79c0ff">module</span><span style="color:#c9c9c9">.exports = {</span></div>
<div class="ln" style="left:24px;top:160.26px;font-size:28.85px;line-height:36.0px;-webkit-text-stroke:0.3px;"><span style="color:#79c0ff">  darkMode</span><span style="color:#c9c9c9">: ["class"],</span></div>
<div class="ln" style="left:24px;top:196.31px;font-size:28.85px;line-height:36.0px;-webkit-text-stroke:0.3px;"><span style="color:#79c0ff">  content</span><span style="color:#c9c9c9">: [</span></div>
<div class="ln" style="left:24px;top:232.36px;font-size:28.85px;line-height:36.0px;-webkit-text-stroke:0.3px;"><span style="color:#c9c9c9">    './pages/<span class="as">*</span><span class="as">*</span>/<span class="as">*</span>.{ts,tsx}',</span></div>
<div style="left:-1.5px;top:230.5px;width:981.0px;height:60.0px;background:rgba(20,20,22,0.72);"></div>
</div>
<div style="left:2463.2px;top:1190.3px;width:10.8px;height:10.8px;background:#2fd8a4;border-radius:50%;"></div>
<svg style="left:2506.0px;top:1178.0px;" width="32" height="36" viewBox="0 0 32 36"><path d="M3.5 1.5 H20 L29.5 11 V31 a3 3 0 0 1 -3 3 H5 a3 3 0 0 1 -3 -3 V4.5 a3 3 0 0 1 3 -3 Z" fill="none" stroke="#f0f0f0" stroke-width="2"/><path d="M20 2 V11 H29" fill="none" stroke="#f0f0f0" stroke-width="2"/><path d="M12.5 18.5 L8.5 22.5 L12.5 26.5 M19.5 18.5 L23.5 22.5 L19.5 26.5" fill="none" stroke="#f0f0f0" stroke-width="2" stroke-linecap="round" stroke-linejoin="round"/></svg>
<span class="fs" style="left:2561.0px;top:1180.8px;font-size:28.5px;line-height:28.5px;color:#f2f2f2;letter-spacing:0.205px;-webkit-text-stroke:0.7px #f2f2f2;">tailwind.config.js</span>
<svg style="left:2918.2px;top:1418.8px;" width="24.9" height="15.399999999999999" viewBox="0 0 24.9 15.399999999999999"><path d="M2 2 L12.4 13.4 L22.9 2" fill="none" stroke="#e0e0e0" stroke-width="2.4" stroke-linecap="round" stroke-linejoin="round"/></svg>
<svg style="left:3160px;top:1500px" width="270" height="116" viewBox="0 0 2520 1082.7">
<defs>
<radialGradient id="rb" cx="0.38" cy="0.42" r="0.75"><stop offset="0" stop-color="#21d8b8"/><stop offset="0.45" stop-color="#1eb8a0"/><stop offset="0.8" stop-color="#14806f"/><stop offset="1" stop-color="#0b4f49"/></radialGradient>
<linearGradient id="rw" x1="0.8" y1="0" x2="0.2" y2="1"><stop offset="0" stop-color="#1a9685"/><stop offset="0.7" stop-color="#1da590"/><stop offset="1" stop-color="#29dcbc"/></linearGradient>
<linearGradient id="rw2" x1="0.2" y1="0" x2="0.8" y2="1"><stop offset="0" stop-color="#1b9a89"/><stop offset="0.75" stop-color="#1a9483"/><stop offset="1" stop-color="#17a38e"/></linearGradient>
<radialGradient id="vz" cx="0.5" cy="0.55" r="0.6"><stop offset="0" stop-color="#06302b"/><stop offset="1" stop-color="#021412"/></radialGradient>
<linearGradient id="rs" x1="0" y1="0" x2="1" y2="0"><stop offset="0.5" stop-color="#06332f" stop-opacity="0"/><stop offset="1" stop-color="#06332f" stop-opacity="0.78"/></linearGradient>
<filter id="gl" x="-60%" y="-40%" width="220%" height="180%"><feGaussianBlur stdDeviation="22"/></filter>
</defs>
<path d="M548 400 L640 395 L650 480 L600 520 Z" fill="#12796b"/>
<path d="M1850 630 L1960 600 L1900 760 L1830 740 Z" fill="#0e6b5f"/>
<ellipse cx="478" cy="286" rx="246" ry="112" fill="url(#rw)" transform="rotate(6 478 286)"/>
<path d="M590 1083 C470 960 440 880 490 760 C560 560 680 380 860 290 C1050 190 1330 185 1520 270 C1720 350 1800 520 1870 660 C1940 790 1970 950 1885 1083 Z" fill="url(#rb)"/>
<path d="M590 1083 C470 960 440 880 490 760 C560 560 680 380 860 290 C1050 190 1330 185 1520 270 C1720 350 1800 520 1870 660 C1940 790 1970 950 1885 1083 Z" fill="url(#rs)"/>
<path d="M1690 470 C1760 600 1800 720 1830 860 C1870 880 1900 860 1905 800 C1880 690 1820 560 1750 460 Z" fill="#0b4a44" opacity="0.85"/>
<ellipse cx="1225" cy="300" rx="250" ry="86" fill="#1fae98" stroke="#0f7d6e" stroke-width="7"/>
<path d="M600 505 C680 440 730 405 790 420 C900 470 1000 520 1250 542 C1400 545 1550 520 1690 470" fill="none" stroke="#0f7a6c" stroke-width="8"/>
<path d="M720 552 C800 570 900 640 1180 662 C1350 668 1480 650 1550 680 C1620 730 1660 850 1655 950 C1640 1010 1500 1030 1330 1050 C1290 1060 1260 1075 1245 1083 L880 1083 C840 1050 800 990 740 960 C660 930 600 900 580 850 C570 760 640 620 720 552 Z" fill="url(#vz)"/>
<g fill="#25f5dc" opacity="0.55" filter="url(#gl)"><rect x="780" y="655" width="150" height="270" rx="75" transform="rotate(5 855 790)"/><rect x="1222" y="730" width="146" height="265" rx="73" transform="rotate(5 1295 862)"/></g>
<rect x="792" y="668" width="126" height="246" rx="63" fill="#27f7de" transform="rotate(5 855 790)"/>
<rect x="1234" y="740" width="124" height="244" rx="62" fill="#27f7de" transform="rotate(5 1295 862)"/>
<ellipse cx="2000" cy="500" rx="250" ry="116" fill="url(#rw2)" transform="rotate(-4 2000 500)"/>
</svg>
<div style="left:2442.6px;top:1615.8px;width:984.9px;height:175px;border-radius:25px 0 0 0;background:linear-gradient(90deg,#2fd3a0 0%,#2fd3a0 3%,rgba(47,211,160,0) 38%);"></div>
<div style="left:2442.6px;top:1790.8px;width:984.9px;height:174.5px;border-radius:0 0 0 25px;background:linear-gradient(90deg,#2fd3a0 0%,#2fd3a0 2%,rgba(47,211,160,0) 19%);"></div>
<div style="left:2445.2px;top:1618.3px;width:982.3px;height:344.5px;border-radius:22.5px 0 0 22.5px;background:#131316;"></div>
<div style="left:2481.5px;top:1654.5px;width:51.0px;height:46.0px;border:1.5px solid #3a3a3e;border-radius:11px;background:#18181b;"></div>
<svg style="left:2494.0px;top:1664.5px;" width="26" height="26" viewBox="0 0 26 26"><g fill="none" stroke="#a8a8a8" stroke-width="2.2" stroke-linecap="round"><circle cx="13" cy="13" r="5"/><path d="M18 8.5 V15 a3 3 0 0 0 6 0 V13 a11 11 0 1 0 -4.5 8.8"/></g></svg>
<span class="fs" style="left:2482.5px;top:1730.8px;font-size:33.5px;line-height:33.5px;color:#5c5c60;letter-spacing:0.806px;">Ask genies to work on a task...</span>
<div style="left:2478.5px;top:1861.0px;width:228.5px;height:70.0px;background:#1e1e21;border-radius:9px;"></div>
<div style="left:2488.5px;top:1877.5px;width:102.0px;height:37.0px;background:#111113;border-radius:8px;"></div>
<span class="fs" style="left:2509.0px;top:1885.7px;font-size:23.5px;line-height:23.5px;color:#f4f4f4;letter-spacing:-0.103px;-webkit-text-stroke:0.35px #f4f4f4;">Agent</span>
<span class="fs" style="left:2620.5px;top:1885.7px;font-size:23.5px;line-height:23.5px;color:#808084;letter-spacing:0.12px;-webkit-text-stroke:0.3px #808084;">Chat</span>
<div style="left:2726.0px;top:1864.0px;width:336.0px;height:63.5px;background:#1e1e21;border-radius:9px;"></div>
<span class="fs" style="left:2765.0px;top:1883.7px;font-size:27px;line-height:27px;color:#a0a0a4;letter-spacing:0.239px;-webkit-text-stroke:0.5px #a0a0a4;">Claude–3.5–Sonne...</span>
<div style="left:3233.5px;top:1860.0px;width:71.5px;height:67.5px;background:#19191c;border-radius:12px;"></div>
<svg style="left:3250.0px;top:1873.0px;" width="40" height="40" viewBox="0 0 40 40"><g fill="none" stroke="#69696d" stroke-width="3" stroke-linejoin="round" stroke-linecap="round"><path d="M19.3 2.6 C20.8 13.5 24.5 18 36.4 19.7 C24.5 21.4 20.8 26 19.3 36.8 C17.8 26 14 21.4 2.2 19.7 C14 18 17.8 13.5 19.3 2.6 Z"/><path d="M32.2 4.2 V12.6 M28 8.4 H36.4"/><path d="M6.1 27 L8.6 29.5 L6.1 32 L3.6 29.5 Z" fill="#69696d" stroke-width="1.6"/></g></svg>
<div style="left:3333.4px;top:1864.8px;width:62.6px;height:62.6px;background:#2b9373;border-radius:50%;"></div>
<div style="left:3352.7px;top:1884.1px;width:24.0px;height:24.0px;background:#141216;border-radius:7.5px;"></div>
</body></html>
